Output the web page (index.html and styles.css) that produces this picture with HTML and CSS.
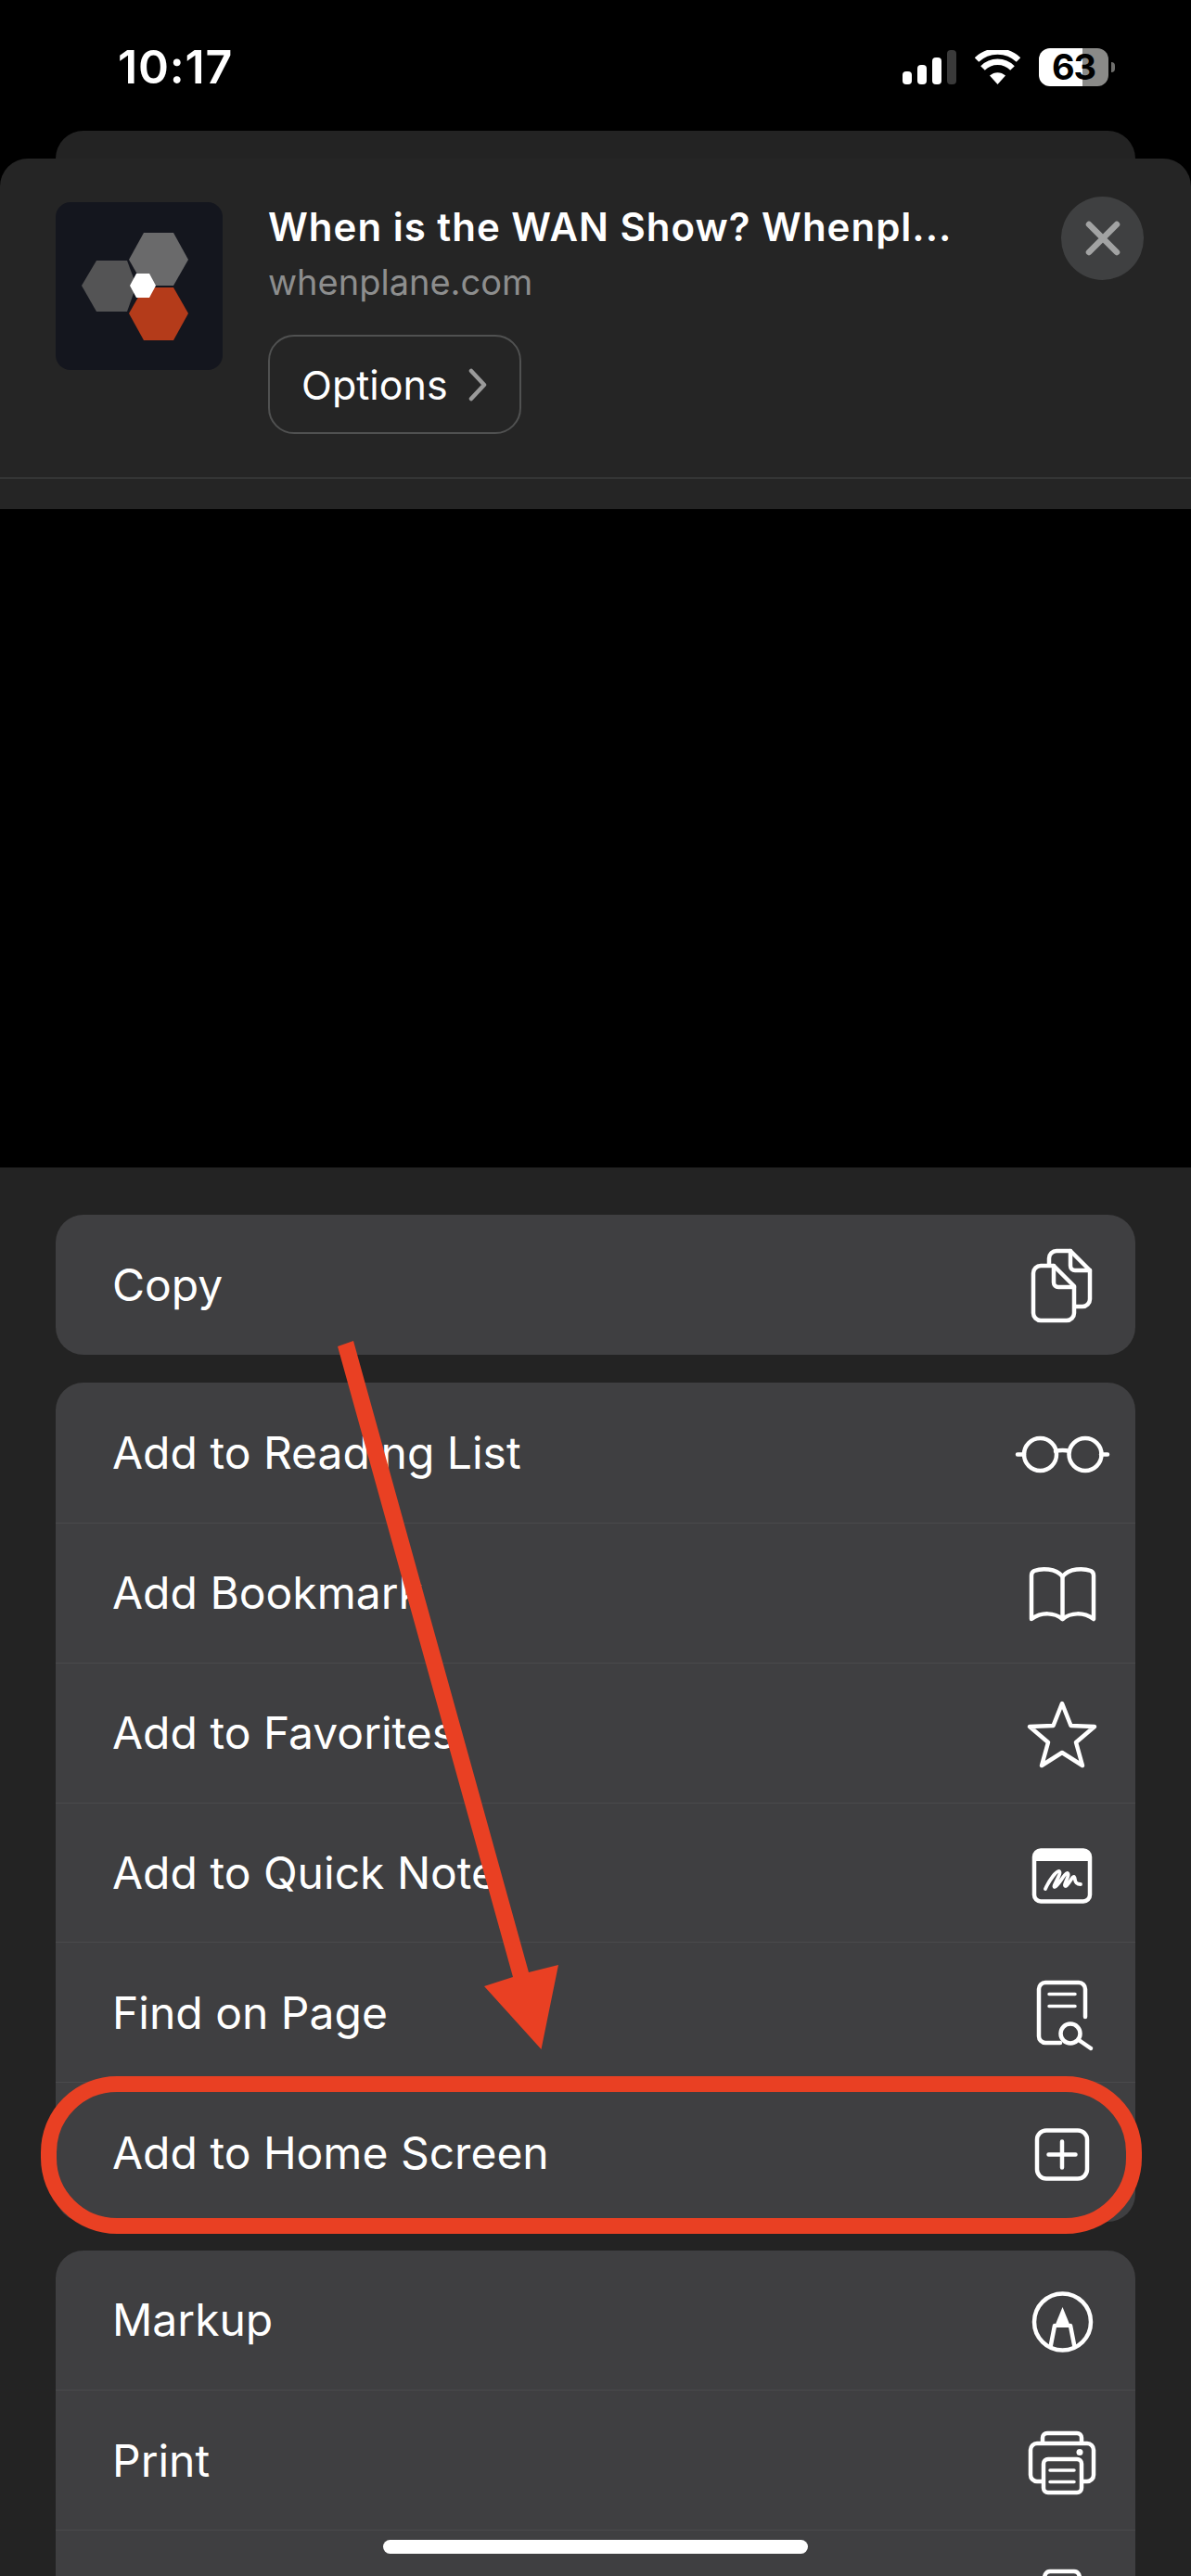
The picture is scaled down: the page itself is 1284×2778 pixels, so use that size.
FILE: index.html
```html
<!DOCTYPE html>
<html lang="en">
<head>
    <meta charset="UTF-8">
    <meta name="viewport" content="width=device-width, initial-scale=1.0">
    <title>Add to Home Screen</title>
    <link rel="stylesheet" href="styles.css">
</head>
<body>
    <div class="phone">
        <!-- status bar -->
        <div class="status">
            <span class="time">10:17</span>
            <div class="status-icons">
                <svg class="signal" width="58" height="37" viewBox="0 0 58 37">
                    <rect x="0" y="23" width="10" height="14" rx="4" fill="#fff"/>
                    <rect x="16" y="16" width="10" height="21" rx="4" fill="#fff"/>
                    <rect x="32" y="8" width="10" height="29" rx="4" fill="#fff"/>
                    <rect x="48" y="0" width="10" height="37" rx="4" fill="#3a3a3a"/>
                </svg>
                <svg class="wifi" width="49" height="37" viewBox="0 0 49 37">
                    <path d="M24.5 37 L16 27.5 C21 23 28 23 33 27.5 Z" fill="#fff"/>
                    <path d="M8.5 19.5 C17.5 10.5 31.5 10.5 40.5 19.5" fill="none" stroke="#fff" stroke-width="6.5"/>
                    <path d="M2 10.5 C14.5 -1.5 34.5 -1.5 47 10.5" fill="none" stroke="#fff" stroke-width="6.5"/>
                </svg>
                <div class="battery">
                    <div class="battery-body">
                        <span class="battery-num">63</span>
                    </div>
                    <div class="battery-nub"></div>
                </div>
            </div>
        </div>

        <!-- share banner -->
        <div class="card-back"></div>
        <div class="banner">
            <div class="banner-top">
                <svg class="app-icon" width="180" height="181" viewBox="0 0 180 181">
                    <polygon points="95,33 127,33 143,62 127,90 95,90 79,62" fill="#6a6a6b"/>
                    <polygon points="44,63 77,63 87,90 77,118 44,118 28,90" fill="#545455"/>
                    <polygon points="95,92 127,92 143,120 127,149 95,149 79,120" fill="#b43b1a"/>
                    <polygon points="87,77 101,77 108,90 101,103 87,103 80,90" fill="#fff"/>
                </svg>
                <div class="banner-text">
                    <div class="banner-title">When is the WAN Show? Whenpl...</div>
                    <div class="banner-url">whenplane.com</div>
                    <div class="options">
                        <span>Options</span>
                        <svg width="20" height="36" viewBox="0 0 20 36">
                            <path d="M3 3 L17 18 L3 33" fill="none" stroke="#9a9a9a" stroke-width="4.5" stroke-linecap="round" stroke-linejoin="round"/>
                        </svg>
                    </div>
                </div>
                <div class="close">
                    <svg width="38" height="38" viewBox="0 0 38 38">
                        <path d="M4 4 L34 34 M34 4 L4 34" stroke="#a2a3a3" stroke-width="6.5" stroke-linecap="round"/>
                    </svg>
                </div>
            </div>
        </div>

        <!-- action sheet -->
        <div class="sheet">
            <div class="group">
                <div class="row">
                    <span>Copy</span>
                    <svg class="ico" viewBox="0 0 120 100">
                        <path d="M46 28 V22 a8 8 0 0 1 8 -8 H69 L90 35 V66 a8 8 0 0 1 -8 8 H74"/>
                        <path d="M69 14 V30 a5 5 0 0 0 5 5 H90"/>
                        <path d="M51 30 H37 a8 8 0 0 0 -8 8 V81 a8 8 0 0 0 8 8 H65 a8 8 0 0 0 8 -8 V52 Z"/>
                        <path d="M51 30 V48 a5 5 0 0 0 5 5 H73"/>
                    </svg>
                </div>
            </div>
            <div class="group">
                <div class="row">
                    <span>Add to Reading List</span>
                    <svg class="ico" viewBox="0 0 120 100">
                        <circle cx="36.5" cy="51.5" r="17.5"/>
                        <circle cx="85" cy="51.5" r="17.5"/>
                        <path d="M53 48 C57 46.5 64 46.5 68 48"/>
                        <path d="M12 51.5 H19 M102 51.5 H109"/>
                    </svg>
                </div>
                <div class="row">
                    <span>Add Bookmark</span>
                    <svg class="ico" viewBox="0 0 120 100">
                        <path d="M60.5 32 C53 23 38 23 30 26 C28 27 27 29 27 31 V78 C38 70 52 71 60.5 78 C69 71 83 70 94 78 V31 C94 29 93 27 91 26 C83 23 68 23 60.5 32 Z"/>
                        <path d="M60.5 32 V78"/>
                    </svg>
                </div>
                <div class="row">
                    <span>Add to Favorites</span>
                    <svg class="ico" viewBox="0 0 120 100">
                        <polygon points="60,18 69.5,42 95,43 75,60 82,85 60,71 38,85 45,60 25,43 50.5,42"/>
                    </svg>
                </div>
                <div class="row">
                    <span>Add to Quick Note</span>
                    <svg class="ico" viewBox="0 0 120 100">
                        <rect x="30" y="25.5" width="60" height="55" rx="7"/>
                        <path class="solid" d="M30 37 V32 a6 6 0 0 1 6 -6 H84 a6 6 0 0 1 6 6 V37 Z"/>
                        <path class="sign" d="M42 67 C46 58 54 47 57 48 C60 50 49 65 52 65 C56 64 63 49 66 50 C69 52 60 64 64 64 C67 63 71 53 73 54 C75 56 72 62 80 62"/>
                    </svg>
                </div>
                <div class="row">
                    <span>Find on Page</span>
                    <svg class="ico" viewBox="0 0 120 100">
                        <path d="M85 55 V25 a7 7 0 0 0 -7 -7 H42 a7 7 0 0 0 -7 7 V76 a7 7 0 0 0 7 7 H58"/>
                        <path class="thin" d="M46 30.5 H74 M46 43.5 H74"/>
                        <ellipse cx="69" cy="73" rx="10.5" ry="10.5"/>
                        <path d="M78 80 L91 89"/>
                    </svg>
                </div>
                <div class="row">
                    <span>Add to Home Screen</span>
                    <svg class="ico" viewBox="0 0 120 100">
                        <rect x="33" y="26.5" width="54" height="52" rx="10"/>
                        <path d="M60 38.5 V66.5 M45.5 52.5 H74.5"/>
                    </svg>
                </div>
            </div>
            <div class="group">
                <div class="row">
                    <span>Markup</span>
                    <svg class="ico" viewBox="0 0 120 100">
                        <circle cx="60.5" cy="52" r="30.5"/>
                        <path class="solid" d="M60.5 36 L69.5 58 H51.5 Z"/>
                        <path d="M52 56 L47.5 79 M69 56 L73.5 79"/>
                    </svg>
                </div>
                <div class="row">
                    <span>Print</span>
                    <svg class="ico" viewBox="0 0 120 100">
                        <path d="M39 30 V26 a5 5 0 0 1 5 -5 H76 a5 5 0 0 1 5 5 V30"/>
                        <path d="M38 73 H33 a7 7 0 0 1 -7 -7 V39 a7 7 0 0 1 7 -7 H87 a7 7 0 0 1 7 7 V66 a7 7 0 0 1 -7 7 H82"/>
                        <rect x="40" y="49" width="41" height="36" rx="5"/>
                        <path class="thin" d="M47 61 H73 M47 73.5 H73"/>
                        <circle class="solid" cx="79" cy="41.5" r="3.5"/>
                    </svg>
                </div>
                <div class="row">
                    <svg class="ico" viewBox="0 0 120 100">
                        <path d="M36 40 L42 22 a6 6 0 0 1 5 -3 H73 a6 6 0 0 1 5 3 L84 40"/>
                    </svg>
                </div>
            </div>
        </div>

        <!-- annotation drawn on top of the screenshot -->
        <svg class="arrow" width="1284" height="2778" viewBox="0 0 1284 2778">
            <polygon points="364,1452 381,1446 570,2127 602,2119 583.5,2210 522,2142 553,2132" fill="#e94023"/>
        </svg>
        <div class="ring"></div>
        <div class="home-bar"></div>
    </div>
</body>
</html>
```

FILE: styles.css
```css
*{
    margin:0;
    padding:0;
    box-sizing:border-box;
}
body{
    background:#000;
    font-family:Inter, "Liberation Sans", sans-serif;
    color:#fff;
}
.phone{
    position:relative;
    width:1284px;
    height:2778px;
    overflow:hidden;
    background:#000;
}

/* status bar */
.status{
    height:141px;
    padding:50px 82px 0 127px;
    display:flex;
    justify-content:space-between;
    align-items:flex-start;
}
.time{
    font-size:50px;
    font-weight:600;
    line-height:44px;
    letter-spacing:0.8px;
}
.status-icons{
    display:flex;
    align-items:flex-start;
    padding-top:4px;
}
.signal{
    margin-right:20px;
}
.wifi{
    margin-right:20px;
}
.battery{
    display:flex;
    align-items:center;
    margin-top:-2px;
}
.battery-body{
    width:75px;
    height:41px;
    border-radius:12px;
    background:linear-gradient(to right, #fff 47px, #8a8a88 47px);
    display:flex;
    align-items:center;
    justify-content:center;
}
.battery-num{
    color:#000;
    font-size:38px;
    font-weight:700;
    line-height:41px;
    letter-spacing:-1px;
}
.battery-nub{
    width:4px;
    height:11px;
    margin-left:3px;
    border-radius:0 4px 4px 0;
    background:#6f6f6d;
}

/* share banner */
.card-back{
    height:30px;
    margin:0 60px;
    background:#232323;
    border-radius:30px 30px 0 0;
}
.banner{
    height:378px;
    background:#252525;
    border-radius:30px 30px 0 0;
}
.banner-top{
    height:345px;
    padding:47px 51px 0 60px;
    display:flex;
    align-items:flex-start;
    border-bottom:1px solid #454646;
}
.app-icon{
    flex:none;
    background:#14161e;
    border-radius:16px;
}
.banner-text{
    margin-left:49px;
    flex:1;
}
.banner-title{
    font-size:42px;
    font-weight:600;
    line-height:50px;
    margin-top:2px;
    letter-spacing:1px;
    white-space:nowrap;
}
.banner-url{
    color:#8d8e8e;
    font-size:38px;
    line-height:50px;
    margin-top:9px;
}
.options{
    width:273px;
    height:107px;
    margin-top:32px;
    padding-left:34px;
    display:flex;
    align-items:center;
    gap:22px;
    border:2px solid #505151;
    border-radius:28px;
    font-size:43px;
}
.close{
    flex:none;
    width:89px;
    height:90px;
    margin-top:-6px;
    border-radius:50%;
    background:#3f4041;
    display:flex;
    align-items:center;
    justify-content:center;
}

/* action sheet */
.sheet{
    margin-top:710px;
    height:1519px;
    padding:51px 60px 0;
    background:#232323;
    display:flex;
    flex-direction:column;
    gap:30.5px;
}
.group{
    flex:none;
    background:#3f3f41;
    border-radius:30px;
    overflow:hidden;
}
.row{
    height:150.8px;
    padding:0 19px 0 61px;
    display:flex;
    align-items:center;
    justify-content:space-between;
    font-size:48px;
    border-top:1px solid #4a4a4c;
}
.row:first-child{
    border-top:0;
}
.row:last-child:not(:first-child) .ico{
    margin-left:auto;
}
.ico{
    width:120px;
    height:100px;
    flex:none;
    fill:none;
    stroke:#fff;
    stroke-width:4.5;
    stroke-linecap:round;
    stroke-linejoin:round;
}
.ico .solid{
    fill:#fff;
    stroke:none;
}
.ico .thin{
    stroke-width:3.5;
}
.ico .sign{
    stroke-width:3.8;
}

/* annotation */
.arrow{
    position:absolute;
    left:0;
    top:0;
}
.ring{
    position:absolute;
    left:44px;
    top:2239px;
    width:1187px;
    height:170px;
    border:17px solid #e94023;
    border-radius:82px;
}
.home-bar{
    position:absolute;
    left:413px;
    top:2739px;
    width:458px;
    height:15px;
    border-radius:8px;
    background:#fff;
}
```
